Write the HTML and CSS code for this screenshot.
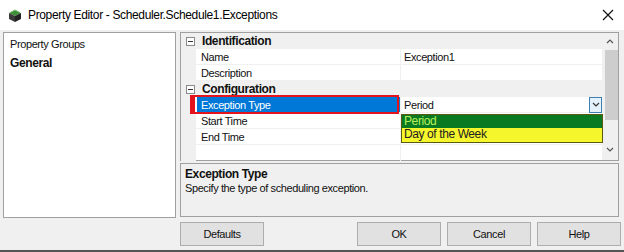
FILE: index.html
```html
<!DOCTYPE html>
<html lang="en">
<head>
  <meta charset="UTF-8">
  <title>Property Editor</title>
  <link rel="stylesheet" href="styles.css">
</head>
<body>
  <div class="window">
    <div class="titlebar">
      <svg class="app-icon" width="16" height="16" viewBox="0 0 16 16">
        <path d="M2 6 L8 3 L14 6 L8 9 Z" fill="#3f8f3a"/>
        <path d="M2 6 L8 9 L8 15 L2 12 Z" fill="#3a3a3a"/>
        <path d="M14 6 L8 9 L8 15 L14 12 Z" fill="#222"/>
        <path d="M4 5 L8 3 L12 5" stroke="#7cc26e" stroke-width="1" fill="none"/>
      </svg>
      <span class="title">Property Editor - Scheduler.Schedule1.Exceptions</span>
      <svg class="close" width="12" height="12" viewBox="0 0 12 12">
        <path d="M1 1 L11 11 M11 1 L1 11" stroke="#111" stroke-width="1.2"/>
      </svg>
    </div>

    <div class="main">
      <div class="groups">
        <div class="groups-label">Property Groups</div>
        <div class="groups-item">General</div>
      </div>

      <div class="right">
        <div class="grid">
          <div class="rows">
            <div class="row category">
              <span class="margin"><span class="toggle"></span></span>
              <span class="name">Identification</span>
            </div>
            <div class="row">
              <span class="margin"></span>
              <span class="name">Name</span>
              <span class="value">Exception1</span>
            </div>
            <div class="row">
              <span class="margin"></span>
              <span class="name">Description</span>
              <span class="value"></span>
            </div>
            <div class="row category">
              <span class="margin"><span class="toggle"></span></span>
              <span class="name">Configuration</span>
            </div>
            <div class="row selected">
              <span class="margin"></span>
              <span class="name">Exception Type</span>
              <span class="value">Period
                <span class="drop-btn">
                  <svg width="8" height="6" viewBox="0 0 8 6"><path d="M1 1 L4 4 L7 1" stroke="#333" stroke-width="1.2" fill="none"/></svg>
                </span>
              </span>
            </div>
            <div class="row">
              <span class="margin"></span>
              <span class="name">Start Time</span>
              <span class="value"></span>
            </div>
            <div class="row">
              <span class="margin"></span>
              <span class="name">End Time</span>
              <span class="value"></span>
            </div>
            <div class="row last">
              <span class="margin"></span>
              <span class="name"></span>
              <span class="value"></span>
            </div>
          </div>
          <div class="scrollbar">
            <svg width="8" height="6" viewBox="0 0 8 6"><path d="M1 5 L4 2 L7 5" stroke="#555" stroke-width="1.2" fill="none"/></svg>
            <div class="thumb"></div>
            <svg width="8" height="6" viewBox="0 0 8 6"><path d="M1 1 L4 4 L7 1" stroke="#555" stroke-width="1.2" fill="none"/></svg>
          </div>

          <div class="highlight"></div>
          <div class="dropdown">
            <div class="opt opt-period">Period</div>
            <div class="opt opt-week">Day of the Week</div>
          </div>
        </div>

        <div class="desc">
          <div class="desc-title">Exception Type</div>
          <div class="desc-text">Specify the type of scheduling exception.</div>
        </div>
      </div>
    </div>

    <div class="buttons">
      <button class="btn">Defaults</button>
      <span class="spacer"></span>
      <button class="btn">OK</button>
      <button class="btn">Cancel</button>
      <button class="btn">Help</button>
    </div>
  </div>
</body>
</html>
```

FILE: styles.css
```css
body {
  margin: 0;
  background-color: #f0f0f0;
  font-family: 'Liberation Sans', Arial, sans-serif;
  font-size: 11px;
  letter-spacing: -0.4px;
  color: #111;
}
.window {
  width: 624px;
  height: 252px;
  background-color: #f0f0f0;
  border-bottom: 2px solid #555;
  box-sizing: border-box;
  overflow: hidden;
}
.titlebar {
  height: 30px;
  background-color: #fff;
  display: flex;
  align-items: center;
  padding: 0 10px 0 7px;
}
.app-icon {
  margin-right: 5px;
}
.title {
  font-size: 12px;
  color: #000;
  flex: 1;
  letter-spacing: -0.35px;
}
.main {
  display: flex;
  gap: 4px;
  padding: 2px 5px 0 3px;
}
.groups {
  width: 173px;
  height: 186px;
  box-sizing: border-box;
  background-color: #fff;
  border: 1px solid #a0a0a0;
  padding: 5px 6px;
}
.groups-label {
  height: 16px;
}
.groups-item {
  font-weight: bold;
  font-size: 12px;
  margin-top: 2px;
}
.right {
  width: 439px;
  display: flex;
  flex-direction: column;
  gap: 2px;
}
.grid {
  position: relative;
  height: 129px;
  box-sizing: border-box;
  border: 1px solid #a0a0a0;
  background-color: #fff;
  display: flex;
}
.rows {
  flex: 1;
}
.row {
  display: flex;
  height: 16px;
  line-height: 16px;
  box-sizing: border-box;
}
.row .margin {
  width: 15px;
  background-color: #f0f0f0;
  position: relative;
}
.row .name {
  width: 205px;
  padding-left: 5px;
  box-sizing: border-box;
  border-bottom: 1px solid #f0f0f0;
  border-right: 1px solid #f0f0f0;
  white-space: nowrap;
}
.row .value {
  flex: 1;
  padding-left: 3px;
  border-bottom: 1px solid #f0f0f0;
  position: relative;
}
.row.last .name,
.row.last .value {
  border-bottom: none;
}
.row.category {
  background-color: #f0f0f0;
}
.row.category .name {
  font-weight: bold;
  font-size: 12px;
  border: none;
  padding-left: 6px;
}
.toggle {
  position: absolute;
  left: 5px;
  top: 4px;
  width: 7px;
  height: 7px;
  border: 1px solid #8a8a8a;
  background-color: #fff;
}
.toggle::after {
  content: "";
  position: absolute;
  left: 1px;
  top: 3px;
  width: 5px;
  height: 1px;
  background-color: #333;
}
.row.selected .name {
  background-color: #0078d7;
  color: #fff;
}
.drop-btn {
  position: absolute;
  right: 0;
  top: 0;
  width: 11px;
  height: 14px;
  border: 1px solid #3c7fb1;
  background-color: #e5f1fb;
  display: flex;
  align-items: center;
  justify-content: center;
}
.scrollbar {
  width: 16px;
  background-color: #f0f0f0;
  display: flex;
  flex-direction: column;
  align-items: center;
  padding-top: 5px;
  box-sizing: border-box;
}
.thumb {
  width: 13px;
  height: 70px;
  background-color: #cdcdcd;
  margin: 6px 0 27px 3px;
}
.highlight {
  position: absolute;
  left: 9px;
  top: 62px;
  width: 209px;
  height: 19px;
  box-sizing: border-box;
  border: 2px solid #e3141c;
  border-left-width: 5px;
  box-shadow: inset 2px 0 0 #fff;
}
.dropdown {
  position: absolute;
  left: 220px;
  top: 81px;
  width: 202px;
  height: 29px;
  box-sizing: border-box;
  border: 1px solid #5b5b10;
}
.opt {
  height: 13px;
  line-height: 13px;
  padding-left: 2px;
  font-size: 12px;
}
.opt-period {
  background-color: #0a7a22;
  color: #b8f05a;
}
.opt-week {
  height: 14px;
  background-color: #f6f62c;
  color: #222;
}
.desc {
  height: 54px;
  box-sizing: border-box;
  border: 1px solid #a0a0a0;
  padding: 3px 4px;
}
.desc-title {
  font-weight: bold;
  font-size: 12px;
  line-height: 14px;
}
.desc-text {
  line-height: 14px;
}
.buttons {
  display: flex;
  gap: 6px;
  padding: 4px 3px 0 180px;
}
.spacer {
  flex: 1;
}
.btn {
  width: 84px;
  height: 24px;
  background-color: #e1e1e1;
  border: 1px solid #adadad;
  font-family: 'Liberation Sans', Arial, sans-serif;
  font-size: 11px;
  letter-spacing: -0.4px;
  color: #111;
  padding: 0;
}
```
